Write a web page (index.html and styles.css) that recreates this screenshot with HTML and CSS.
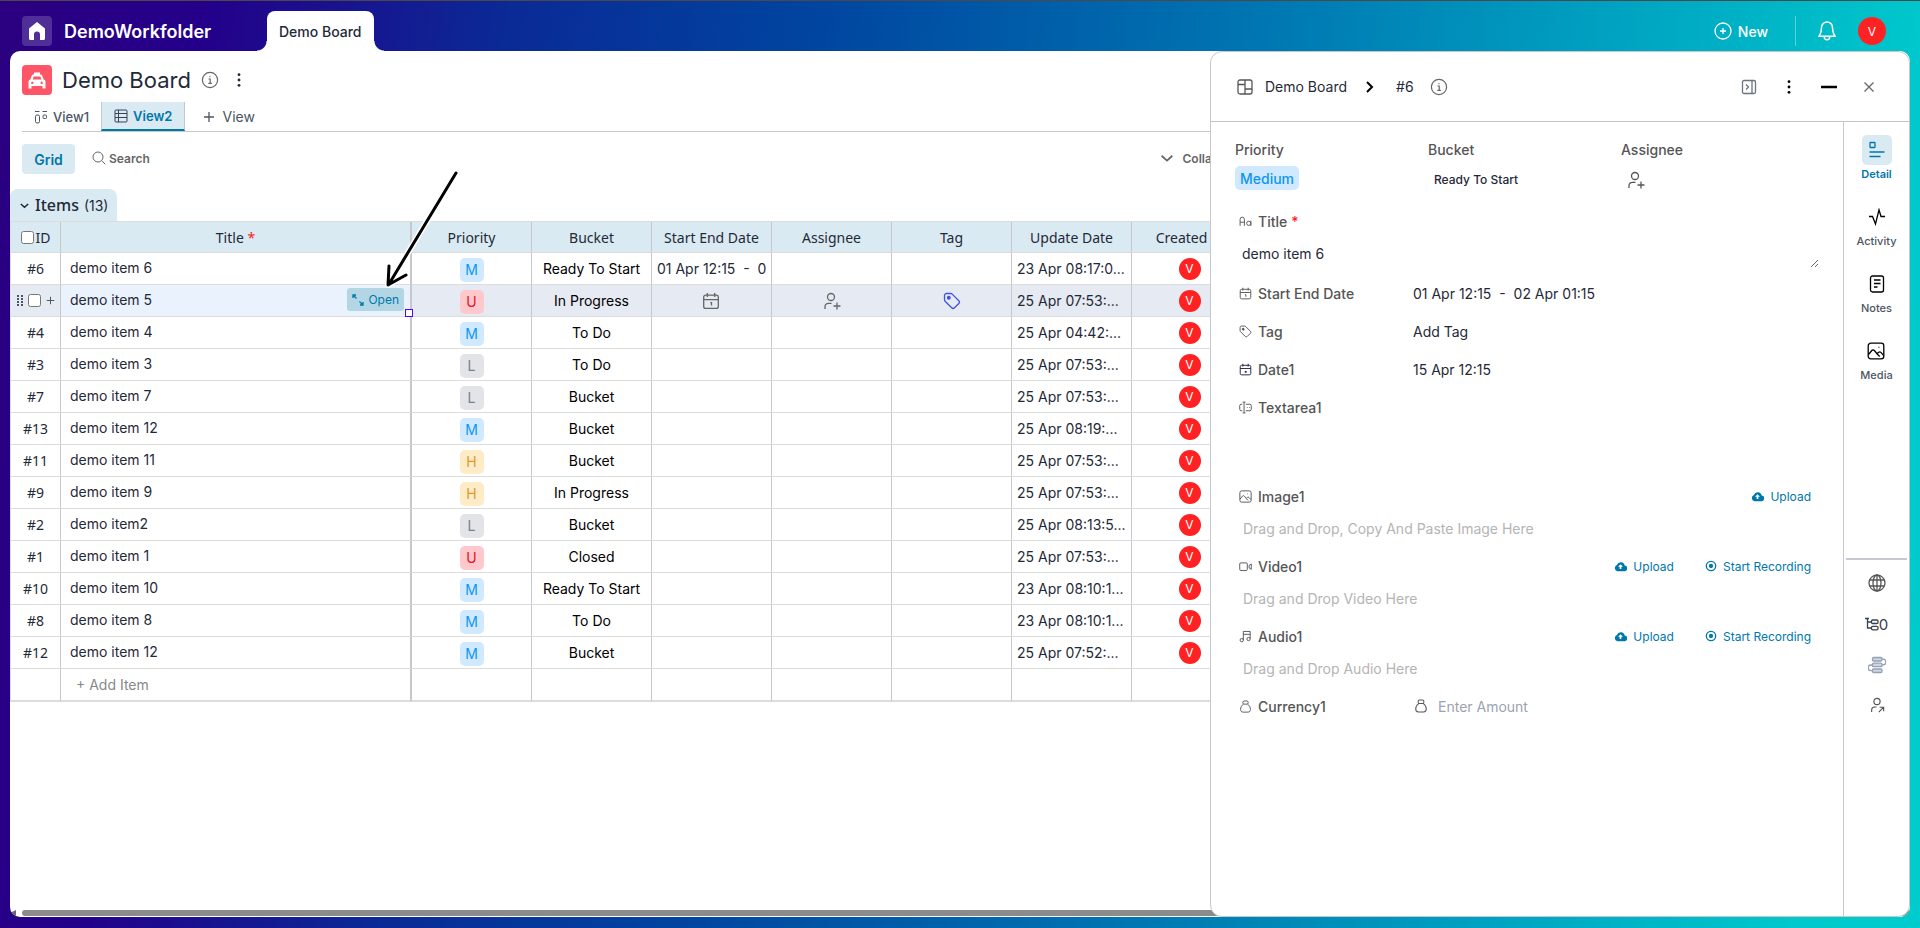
FILE: index.html
```
<!DOCTYPE html>
<html lang="en">
<head>
  <meta charset="UTF-8" />
  <meta name="viewport" content="width=device-width, initial-scale=1.0"/>
  <title>Demo Board</title>
  <link rel="stylesheet" href="styles.css">
</head>
<body>
  <svg class="sprite" aria-hidden="true">
    <symbol id="i-info" viewBox="0 0 18 18"><circle cx="9" cy="9" r="7.6"/><path d="M7.5 8h1.7v4.2M7.3 12.4h3.6M8.9 5.3v.9"/></symbol>
    <symbol id="i-dots" viewBox="0 0 18 18"><g fill="currentColor" stroke="none"><circle cx="9" cy="3" r="1.6"/><circle cx="9" cy="9" r="1.6"/><circle cx="9" cy="15" r="1.6"/></g></symbol>
    <symbol id="i-chevron" viewBox="0 0 18 18"><path d="M3 6.5l6 5.5 6-5.5"/></symbol>
    <symbol id="i-calendar" viewBox="0 0 18 18"><rect x="1.7" y="3.2" width="14.6" height="13.2" rx="2"/><path d="M1.7 7.6h14.6M5.3 1v4M12.7 1v4M8.3 10.6h1.2v3"/></symbol>
    <symbol id="i-calendar-dot" viewBox="0 0 18 18"><rect x="1.7" y="3.2" width="14.6" height="13.2" rx="2"/><path d="M1.7 7.6h14.6M5.3 1v4M12.7 1v4"/><rect x="8" y="11" width="2.5" height="2.5" fill="currentColor" stroke="none"/></symbol>
    <symbol id="i-user-plus" viewBox="0 0 18 18"><circle cx="8" cy="5" r="3.5"/><path d="M2 17v-2.2a3.5 3.5 0 0 1 3.5-3.5h3M14 10.5v7M10.5 14h7"/></symbol>
    <symbol id="i-user-arrow" viewBox="0 0 18 18"><circle cx="9" cy="5" r="3.5"/><path d="M3 17v-2.2a3.5 3.5 0 0 1 3.5-3.5h2M11 17l5-5M12 11.5h4.5V16"/></symbol>
    <symbol id="i-tag" viewBox="0 0 18 18"><path d="M1.5 3.5a2 2 0 0 1 2-2h4.3a2 2 0 0 1 1.4.6l6.6 6.6a2 2 0 0 1 0 2.8l-4.3 4.3a2 2 0 0 1-2.8 0L2.1 9.2a2 2 0 0 1-.6-1.4z"/><circle cx="5.8" cy="5.8" r="1.3" fill="currentColor"/></symbol>
    <symbol id="i-image" viewBox="0 0 18 18"><rect x="1.2" y="1.2" width="15.6" height="15.6" rx="2.6"/><path d="M1.5 12.5l3.3-4a1.7 1.7 0 0 1 2.6 0l3 3.7 2.3 2.3M10.3 11.5l1.4-1.2a1.6 1.6 0 0 1 2.2.1l2.7 3M11.5 5.3h.8"/></symbol>
    <symbol id="i-cloud" viewBox="0 0 18 14"><path fill="currentColor" fill-rule="evenodd" stroke="none" d="M14.8 5.7A5.6 5.6 0 0 0 4 4.9 4.5 4.5 0 0 0 4.7 13.5h9.5a3.9 3.9 0 0 0 .6-7.8zM9 3.8l3.4 3.5h-2.2v3.2H7.8V7.3H5.6z"/></symbol>
    <symbol id="i-record" viewBox="0 0 18 18"><circle cx="9" cy="9" r="7" stroke-width="2"/><circle cx="9" cy="9" r="3.2" fill="currentColor" stroke="none"/></symbol>
    <symbol id="i-bag" viewBox="0 0 18 18"><path d="M6.3 5.7C3.5 7.5 2.2 10.3 2.2 13c0 2.5 1.3 3.8 3.6 3.8h6.4c2.3 0 3.6-1.3 3.6-3.8 0-2.7-1.3-5.5-4.1-7.3zM6.3 5.7c-1.5-1.2-1.5-4.3.7-4.3h4c2.2 0 2.2 3.1.7 4.3"/></symbol>
    <symbol id="i-plus" viewBox="0 0 12 12"><path d="M6 1v10M1 6h10"/></symbol>
  </svg>

  <header class="topbar">
    <button class="home-btn" aria-label="Home">
      <svg viewBox="0 0 18 18"><path d="M9 0l8 6.5V16.5a1.5 1.5 0 0 1-1.5 1.5H12v-5.500a3 3 0 0 0-6 0V18H2.5A1.5 1.5 0 0 1 1 16.5V6.5z" fill="#fff" stroke="none"/></svg>
    </button>
    <div class="workfolder">DemoWorkfolder</div>
    <a class="board-tab" href="#">Demo Board</a>
    <div class="topbar-right">
      <button class="new-btn">
        <svg class="icon" viewBox="0 0 18 18"><circle cx="9" cy="9" r="8"/><path d="M9 6v6M6 9h6"/></svg>
        New
      </button>
      <span class="separator"></span>
      <button class="bell-btn" aria-label="Notifications">
        <svg viewBox="0 0 18 20"><path d="M9 1a5.5 5.5 0 0 0-5.5 5.5C3.5 12 2 13.5 1 15.3h16c-1-1.8-2.5-3.3-2.5-8.8A5.5 5.5 0 0 0 9 1zM6.3 16a2.7 2.7 0 0 0 5.4 0"/></svg>
      </button>
      <span class="avatar avatar-lg">V</span>
    </div>
  </header>

  <main class="workspace">
    <section class="board">
      <div class="board-head">
        <div class="board-title">
          <span class="board-icon">
            <svg viewBox="0 0 18 18"><path d="M6 1.5h6v2h-6zM5.5 3.5h7a2 2 0 0 1 1.9 1.4L15.6 8.5A2.5 2.5 0 0 1 17.5 11v6.5h-3V15h-11v2.5h-3V11A2.5 2.5 0 0 1 2.4 8.5L3.6 4.9A2 2 0 0 1 5.5 3.5zM5.7 5.5L4.7 8.5h8.6l-1-3zM4.3 10.6a1.2 1.2 0 1 0 .01 0zM13.7 10.6a1.2 1.2 0 1 0 .01 0z" fill="#fff" fill-rule="evenodd" stroke="none"/></svg>
          </span>
          <h1>Demo Board</h1>
          <svg class="icon info"><use href="#i-info"/></svg>
          <button class="plain" aria-label="Board menu"><svg class="icon dots"><use href="#i-dots"/></svg></button>
        </div>
        <nav class="views">
          <a class="view" href="#">
            <svg class="icon sm" viewBox="0 0 14 14"><path d="M1 1.5h4.500M8.5 1.5H13M1.5 6.500a1.500 1.500 0 0 1 1.500-1.500h1A1.500 1.500 0 0 1 5.500 6.500v5A1.500 1.500 0 0 1 4 13H3a1.500 1.500 0 0 1-1.500-1.500z"/><rect x="9" y="5" width="3.500" height="3.500" rx="1"/></svg>
            View1
          </a>
          <a class="view active" href="#">
            <svg class="icon sm" viewBox="0 0 14 14"><rect x="1" y="1" width="12" height="12" rx="1"/><path d="M1 4.500h12M1 8.500h12M4.500 1v12M8.500 4.500"/></svg>
            View2
          </a>
          <button class="add-view"><svg class="icon plus"><use href="#i-plus"/></svg> View</button>
        </nav>
      </div>

      <div class="toolbar">
        <button class="grid-btn">Grid</button>
        <button class="search-btn">
          <svg class="icon sm" viewBox="0 0 14 14"><circle cx="6" cy="6" r="5"/><path d="M9.7 9.7l3.5 3.5"/></svg>
          Search
        </button>
        <button class="collapse-btn"><svg class="icon chev"><use href="#i-chevron"/></svg> Collapse</button>
      </div>

      <button class="group-tab"><svg class="icon chev-sm"><use href="#i-chevron"/></svg><b>Items</b> (13)</button>

      <table class="grid">
        <colgroup>
          <col class="c-id"><col class="c-title"><col><col><col><col><col><col><col>
          <col class="c-rest">
        </colgroup>
        <thead>
          <tr>
            <th><label class="check-all"><input type="checkbox">ID</label></th>
            <th>Title <span class="req">*</span></th>
            <th>Priority</th>
            <th>Bucket</th>
            <th>Start End Date</th>
            <th>Assignee</th>
            <th>Tag</th>
            <th>Update Date</th>
            <th>Created By</th>
            <th></th>
          </tr>
        </thead>
        <tbody id="rows"></tbody>
      </table>

      <div class="hscroll"><span class="hscroll-arrow"></span><span class="hscroll-thumb"></span></div>

      <svg class="pointer-arrow" viewBox="0 0 90 130">
        <path class="halo" d="M78 9L11 120M11 102l-1 19 18-10"/>
        <path d="M78 9L11 120M11 102l-1 19 18-10"/>
      </svg>
    </section>

    <aside class="panel">
      <div class="panel-head">
        <svg class="icon board-ic" viewBox="0 0 16 16"><rect x="1" y="1" width="14" height="14" rx="2"/><path d="M8 1v14M1 5.5h7M8 10h7M4.5 5.5"/></svg>
        <span>Demo Board</span>
        <svg class="icon crumb" viewBox="0 0 10 12"><path d="M2 1l5 5-5 5"/></svg>
        <span>#6</span>
        <svg class="icon info"><use href="#i-info"/></svg>
        <div class="panel-actions">
          <button class="plain" aria-label="Dock"><svg class="icon dock" viewBox="0 0 16 16"><rect x="1.500" y="1.500" width="13" height="13" rx="1.5"/><path d="M11 1.500v13M5 5.5L7.5 8 5 10.5"/></svg></button>
          <button class="plain" aria-label="Item menu"><svg class="icon dots dark"><use href="#i-dots"/></svg></button>
          <button class="plain" aria-label="Minimize"><svg class="icon minus" viewBox="0 0 16 16"><path d="M0 8h16"/></svg></button>
          <button class="plain" aria-label="Close"><svg class="icon close" viewBox="0 0 16 16"><path d="M3.500 3.500l9 9M12.500 3.500l-9 9"/></svg></button>
        </div>
      </div>

      <div class="panel-body">
        <div class="fields">
          <div class="summary">
            <div><div class="label">Priority</div><button class="medium">Medium</button></div>
            <div><div class="label">Bucket</div><button class="bucket">Ready To Start</button></div>
            <div><div class="label">Assignee</div><button class="assign" aria-label="Add assignee"><svg class="icon user"><use href="#i-user-plus"/></svg></button></div>
          </div>

          <div class="field">
            <label for="f-title"><svg class="icon f" viewBox="0 0 18 18"><path d="M1.5 15V6a3 3 0 0 1 6 0v9M1.5 10h6M16.5 8v7"/><circle cx="13.5" cy="11.5" r="2.9"/></svg>Title <span class="req">*</span></label>
          </div>
          <textarea id="f-title" rows="1">demo item 6</textarea>

          <div class="field"><span class="label"><svg class="icon f"><use href="#i-calendar"/></svg>Start End Date</span><span class="value">01 Apr 12:15&nbsp; -&nbsp; 02 Apr 01:15</span></div>
          <div class="field"><span class="label"><svg class="icon f"><use href="#i-tag"/></svg>Tag</span><span class="value">Add Tag</span></div>
          <div class="field"><span class="label"><svg class="icon f navy"><use href="#i-calendar-dot"/></svg>Date1</span><span class="value">15 Apr 12:15</span></div>
          <div class="field"><label for="f-area"><svg class="icon f" viewBox="0 0 18 18"><path d="M5 1.5h4M5 16.5h4M7 1.5v15M4.5 4.5H3a2 2 0 0 0-2 2v5a2 2 0 0 0 2 2h1.5M9.5 4.5H15a2 2 0 0 1 2 2v5a2 2 0 0 1-2 2H9.5M11 9h1M14 9h1"/></svg>Textarea1</label></div>
          <textarea id="f-area" class="area"></textarea>

          <div class="field">
            <span class="label"><svg class="icon f"><use href="#i-image"/></svg>Image1</span>
            <div class="actions"><button><svg class="icon cloud"><use href="#i-cloud"/></svg>Upload</button></div>
          </div>
          <div class="drop">Drag and Drop, Copy And Paste Image Here</div>

          <div class="field">
            <span class="label"><svg class="icon f" viewBox="0 0 18 18"><rect x="1" y="4" width="10.5" height="10.5" rx="1.5"/><path d="M14 7.5L17 5.5v7.500l-3-2z"/></svg>Video1</span>
            <div class="actions">
              <button><svg class="icon cloud"><use href="#i-cloud"/></svg>Upload</button>
              <button><svg class="icon rec"><use href="#i-record"/></svg>Start Recording</button>
            </div>
          </div>
          <div class="drop">Drag and Drop Video Here</div>

          <div class="field">
            <span class="label"><svg class="icon f" viewBox="0 0 18 18"><path d="M6 14V2h9.5v10M6 6h9.5"/><circle cx="3.8" cy="14" r="2.3"/><circle cx="13.2" cy="12.5" r="2.3"/></svg>Audio1</span>
            <div class="actions">
              <button><svg class="icon cloud"><use href="#i-cloud"/></svg>Upload</button>
              <button><svg class="icon rec"><use href="#i-record"/></svg>Start Recording</button>
            </div>
          </div>
          <div class="drop">Drag and Drop Audio Here</div>

          <div class="field">
            <label for="f-amount"><svg class="icon f"><use href="#i-bag"/></svg>Currency1</label>
            <svg class="icon bag"><use href="#i-bag"/></svg>
            <input id="f-amount" type="text" placeholder="Enter Amount">
          </div>
        </div>

        <nav class="rail">
          <a class="rail-item active" href="#">
            <span class="rail-icon"><svg class="icon r" viewBox="0 0 18 18"><rect x="2" y="1.5" width="5" height="5" rx=".5"/><path d="M1.5 11h15M1.5 15.5h11"/></svg></span>
            Detail
          </a>
          <a class="rail-item" href="#">
            <span class="rail-icon"><svg class="icon r" viewBox="0 0 18 18"><path d="M1 8.5h3.5L7.5 16 11 1.8 13 8.5h4"/></svg></span>
            Activity
          </a>
          <a class="rail-item" href="#">
            <span class="rail-icon"><svg class="icon r" viewBox="0 0 18 18"><rect x="2.5" y="1" width="13" height="16" rx="2"/><path d="M6 5h6.5M6 8.5h6.5M6 12h3.5"/></svg></span>
            Notes
          </a>
          <a class="rail-item" href="#">
            <span class="rail-icon"><svg class="icon r"><use href="#i-image"/></svg></span>
            Media
          </a>
          <div class="rail-tools">
            <button class="plain" aria-label="Web"><svg class="icon r" viewBox="0 0 18 18"><circle cx="9" cy="9" r="8"/><ellipse cx="9" cy="9" rx="4" ry="8"/><path d="M9 1v16M1.5 6h15M1.5 12h15"/></svg></button>
            <button class="plain subitems" aria-label="Sub items"><svg class="icon tree" viewBox="0 0 14 14"><path d="M0 1.5h4M2.5 1.5v9.5h3.5M2.5 5h3.5"/><rect x="6.5" y="3" width="6.5" height="3.5" rx="1.2"/><rect x="6.5" y="9.3" width="6.5" height="3.5" rx="1.2"/></svg>0</button>
            <button class="plain flow" aria-label="Flow"><svg class="icon r" viewBox="0 0 18 18"><g fill="#cfd6df"><rect x="4.5" y="1.5" width="9.5" height="3.5" rx="1.2"/><rect x="4.5" y="7.2" width="9.5" height="3.5" rx="1.2"/><rect x="4.5" y="13" width="9.5" height="3.5" rx="1.2"/></g><path d="M14 3.2h1a2.8 2.8 0 0 1 0 5.7h-1M4.5 9H3a2.8 2.8 0 0 0 0 5.7h1.5"/></svg></button>
            <button class="plain" aria-label="Assign"><svg class="icon user-sm"><use href="#i-user-arrow"/></svg></button>
          </div>
        </nav>
      </div>
    </aside>
  </main>

  <script>
    const items = [
      [6, "demo item 6", "M", "Ready To Start", "23 Apr 08:17:0..."],
      [5, "demo item 5", "U", "In Progress", "25 Apr 07:53:..."],
      [4, "demo item 4", "M", "To Do", "25 Apr 04:42:..."],
      [3, "demo item 3", "L", "To Do", "25 Apr 07:53:..."],
      [7, "demo item 7", "L", "Bucket", "25 Apr 07:53:..."],
      [13, "demo item 12", "M", "Bucket", "25 Apr 08:19:..."],
      [11, "demo item 11", "H", "Bucket", "25 Apr 07:53:..."],
      [9, "demo item 9", "H", "In Progress", "25 Apr 07:53:..."],
      [2, "demo item2", "L", "Bucket", "25 Apr 08:13:5..."],
      [1, "demo item 1", "U", "Closed", "25 Apr 07:53:..."],
      [10, "demo item 10", "M", "Ready To Start", "23 Apr 08:10:1..."],
      [8, "demo item 8", "M", "To Do", "23 Apr 08:10:1..."],
      [12, "demo item 12", "M", "Bucket", "25 Apr 07:52:..."]
    ];

    const icon = (name, cls) => `<svg class="icon ${cls}"><use href="#i-${name}"/></svg>`;
    const grip = `<svg class="grip" viewBox="0 0 6 11"><g fill="currentColor"><rect width="2" height="2"/><rect x="4" width="2" height="2"/><rect y="3" width="2" height="2"/><rect x="4" y="3" width="2" height="2"/><rect y="6" width="2" height="2"/><rect x="4" y="6" width="2" height="2"/><rect y="9" width="2" height="2"/><rect x="4" y="9" width="2" height="2"/></g></svg>`;
    const openBtn = `<button class="open-btn"><svg class="icon expand" viewBox="0 0 12 12"><path d="M1 4V1h3M1 1l3.5 3.5M11 8v3H8M11 11L7.5 7.5"/></svg>Open</button><span class="fill-handle"></span>`;

    const html = items.map(([id, title, priority, bucket, updated]) => {
      const hover = id === 5;
      return `<tr class="${hover ? "hover" : ""}">
        <td class="id">${hover ? `<div class="row-tools">${grip}<input type="checkbox" aria-label="Select row">${icon("plus", "row-plus")}</div>` : "#" + id}</td>
        <td class="title"><div class="title-cell">${title}${hover ? openBtn : ""}</div></td>
        <td><span class="badge ${priority}">${priority}</span></td>
        <td class="bucket-cell">${bucket}</td>
        <td class="date">${id === 6 ? "01 Apr 12:15&nbsp; -&nbsp; 0" : hover ? icon("calendar", "cell-ic") : ""}</td>
        <td>${hover ? icon("user-plus", "cell-ic") : ""}</td>
        <td>${hover ? icon("tag", "cell-ic tag-ic") : ""}</td>
        <td class="updated">${updated}</td>
        <td class="created"><span class="avatar">V</span></td>
        <td></td>
      </tr>`;
    }).join("");

    document.getElementById("rows").innerHTML = html +
      `<tr class="add-row"><td></td><td class="title"><button class="plain add-item">+ Add Item</button></td>${"<td></td>".repeat(8)}</tr>`;
  </script>
</body>
</html>
```
FILE: styles.css
```
* {
  box-sizing: border-box;
}

body {
  margin: 0;
  height: 100vh;
  display: flex;
  flex-direction: column;
  font-family: Inter, sans-serif;
  font-size: 14px;
  color: #1f2937;
  background: linear-gradient(98deg, #2b0080 0%, #24008a 10%, #0a2a96 25%, #0045a0 40%, #0077b2 62%, #00a5c2 80%, #00c8cc 94%, #00cccd 100%);
  border-top: 1px solid #4f4646;
  overflow: hidden;
}

button {
  font: inherit;
  color: inherit;
  background: none;
  border: none;
  padding: 0;
  cursor: pointer;
}

a {
  color: inherit;
  text-decoration: none;
}

input[type="checkbox"] {
  width: 13px;
  height: 13px;
  margin: 0;
}

.sprite {
  position: absolute;
  width: 0;
  height: 0;
}

.icon {
  width: 18px;
  height: 18px;
  flex: none;
  fill: none;
  stroke: currentColor;
  stroke-width: 1.3;
}

.plain {
  display: flex;
  align-items: center;
}

.req {
  color: #ff2020;
}

.avatar {
  display: inline-flex;
  align-items: center;
  justify-content: center;
  width: 22px;
  height: 22px;
  border-radius: 50%;
  background: #ff2222;
  color: #fff;
  font-size: 12px;
  vertical-align: middle;
}

.avatar-lg {
  width: 28px;
  height: 28px;
}

/* top bar */
.topbar {
  display: flex;
  align-items: center;
  height: 50px;
  flex: none;
  padding: 10px 34px 0 22px;
  color: #fff;
}

.home-btn {
  display: flex;
  align-items: center;
  justify-content: center;
  width: 30px;
  height: 30px;
  border-radius: 4px;
  background: rgba(255, 255, 255, 0.18);
}

.home-btn svg {
  width: 18px;
  height: 18px;
}

.workfolder {
  width: 203px;
  margin-left: 12px;
  font-size: 18px;
  font-weight: 600;
}

.board-tab {
  position: relative;
  height: 40px;
  line-height: 42px;
  padding: 0 12px;
  background: #fff;
  color: #1f2937;
  font-size: 14px;
  font-weight: 500;
  border-radius: 8px 8px 0 0;
}

.board-tab::before,
.board-tab::after {
  content: "";
  position: absolute;
  bottom: 0;
  width: 10px;
  height: 10px;
}

.board-tab::before {
  right: 100%;
  background: radial-gradient(circle at 0 0, transparent 9px, #fff 10px);
}

.board-tab::after {
  left: 100%;
  background: radial-gradient(circle at 100% 0, transparent 9px, #fff 10px);
}

.topbar-right {
  display: flex;
  align-items: center;
  margin-left: auto;
}

.new-btn {
  display: flex;
  align-items: center;
  gap: 6px;
  font-weight: 500;
}

.separator {
  width: 1px;
  height: 30px;
  margin: 0 22px 0 27px;
  background: rgba(255, 255, 255, 0.35);
}

.bell-btn {
  display: flex;
  margin-right: 22px;
}

.bell-btn svg {
  width: 18px;
  height: 20px;
  fill: none;
  stroke: #fff;
  stroke-width: 1.5;
}

/* board */
.workspace {
  position: relative;
  flex: 1;
  min-height: 0;
  margin: 0 10px 11px;
  background: #fff;
  border-radius: 10px;
  overflow: hidden;
}

.board {
  display: flex;
  flex-direction: column;
  align-items: flex-start;
  height: 100%;
}

.board-head {
  align-self: stretch;
  margin-left: 12px;
  padding-top: 14px;
  border-bottom: 1px solid #c8c8cc;
}

.board-title {
  display: flex;
  align-items: center;
  height: 30px;
}

.board-icon {
  display: flex;
  align-items: center;
  justify-content: center;
  width: 30px;
  height: 30px;
  border-radius: 4px;
  background: #ff5566;
}

.board-icon svg {
  width: 18px;
  height: 18px;
}

h1 {
  margin: 0 10px;
  font-size: 22px;
  line-height: 28px;
  font-weight: 400;
}

.info {
  color: #666;
  stroke-width: 1.2;
}

.board-title .dots {
  margin-left: 11px;
  width: 18px;
  height: 16px;
}

.views {
  display: flex;
  align-items: center;
  height: 36px;
  padding-top: 7px;
  color: #4b5563;
}

.view {
  display: flex;
  align-items: center;
  gap: 5px;
  height: 29px;
  padding: 0 12px;
  font-size: 13px;
  font-weight: 500;
}

.view.active {
  background: #daeaf2;
  border-left: 1px solid #c8c8cc;
  border-right: 1px solid #c8c8cc;
  border-bottom: 2px solid #0077aa;
  color: #0077aa;
  font-weight: 600;
}

.view.active .icon {
  color: #37415a;
}

.sm {
  width: 14px;
  height: 14px;
  stroke-width: 1;
}

.add-view {
  display: flex;
  align-items: center;
  gap: 7px;
  margin-left: 18px;
}

.plus {
  width: 12px;
  height: 12px;
}

.toolbar {
  display: flex;
  align-items: center;
  padding: 12px 12px 15px;
  align-self: stretch;
  font-size: 12px;
  font-weight: 600;
  color: #666;
}

.grid-btn {
  width: 53px;
  height: 30px;
  border-radius: 4px;
  background: #daeaf2;
  color: #0077aa;
  font-size: 14px;
  font-weight: 600;
}

.search-btn,
.collapse-btn {
  display: flex;
  align-items: center;
  gap: 3px;
  margin-left: 17px;
  padding-bottom: 2px;
}

.collapse-btn {
  gap: 8px;
  margin-left: auto;
  margin-right: 665px;
}

.chev {
  width: 16px;
  height: 16px;
  stroke-width: 2;
}

.group-tab {
  display: flex;
  align-items: center;
  gap: 5px;
  height: 32px;
  padding: 0 9px;
  background: #daeaf2;
  border-radius: 8px 8px 0 0;
}

.group-tab b {
  font-family: "Noto Sans", sans-serif;
  font-size: 16px;
  font-weight: 500;
}

.chev-sm {
  width: 11px;
  height: 11px;
  stroke-width: 2.5;
}

.grid {
  table-layout: fixed;
  width: 100%;
  border-collapse: separate;
  border-spacing: 0;
  border-top: 1px solid #dcdcdc;
  border-left: 1px solid #dcdcdc;
}

.grid col {
  width: 120px;
}

.grid .c-id {
  width: 50px;
}

.grid .c-title {
  width: 351px;
}

.grid .c-rest {
  width: auto;
}

.grid th,
.grid td {
  height: 32px;
  padding: 0;
  border-right: 1px solid #c8c8cc;
  border-bottom: 1px solid #dcdcdc;
  text-align: center;
  white-space: nowrap;
  overflow: hidden;
}

.grid th {
  height: 31px;
  background: #daeaf2;
  font-family: "Noto Sans", sans-serif;
  font-weight: 400;
}

.grid th:nth-child(2),
.grid td:nth-child(2) {
  border-right: 2px solid #c8c8cc;
}

.check-all {
  display: flex;
  align-items: center;
  justify-content: center;
  gap: 2px;
}

.grid .id {
  font-family: "Noto Sans", sans-serif;
}

.grid .title {
  text-align: left;
  overflow: visible;
}

.title-cell {
  position: relative;
  display: flex;
  align-items: center;
  height: 31px;
  padding: 0 6px 2px 9px;
}

.hover td {
  background: #e6eaf3;
}

.grid .hover .title {
  background: #eaf2fd;
}

.row-tools {
  display: flex;
  align-items: center;
  justify-content: center;
  gap: 5px;
  color: #4b5563;
}

.grip {
  width: 6px;
  height: 11px;
}

.row-plus {
  width: 9px;
  height: 9px;
}

.open-btn {
  display: flex;
  align-items: center;
  gap: 4px;
  height: 23px;
  margin-left: auto;
  padding: 0 5px;
  border-radius: 3px;
  background: #b3d6e5;
  color: #0077aa;
  font-size: 12px;
}

.expand {
  width: 12px;
  height: 12px;
}

.fill-handle {
  position: absolute;
  right: -3px;
  bottom: -1px;
  z-index: 1;
  width: 8px;
  height: 8px;
  border: 1px solid #5500ff;
  background: #fff;
}

.badge {
  display: inline-flex;
  align-items: center;
  justify-content: center;
  width: 24px;
  height: 24px;
  margin-top: 2px;
  border-radius: 5px;
  vertical-align: middle;
}

.M {
  background: #d0e9ff;
  color: #0d96f2;
}

.U {
  background: #ffc8cc;
  color: #e8101c;
}

.L {
  background: #e2e4e8;
  color: #7a808c;
}

.H {
  background: #ffebc8;
  color: #e09a20;
}

.bucket-cell {
  color: #000;
}

.grid .date,
.grid .updated {
  padding-left: 5px;
  text-align: left;
}

.grid .hover .date {
  padding: 0 2px 0 0;
  text-align: center;
}

.grid .created {
  padding-right: 4px;
}

.cell-ic {
  color: #666;
  vertical-align: middle;
}

.tag-ic {
  color: #4353e0;
}

.grid .add-row td {
  height: 33px;
  border-bottom-width: 2px;
}

.add-item {
  margin-left: 15px;
  color: #888;
}

.hscroll {
  display: flex;
  align-items: center;
  align-self: stretch;
  gap: 6px;
  height: 8px;
  margin-top: auto;
}

.hscroll-arrow {
  width: 6px;
  height: 6px;
  background: #666;
  clip-path: polygon(100% 0, 100% 100%, 0 50%);
}

.hscroll-thumb {
  flex: 1;
  height: 6px;
  border-radius: 3px;
  background: #8b8b8b;
}

.pointer-arrow {
  position: absolute;
  left: 368px;
  top: 113px;
  width: 90px;
  height: 130px;
  fill: none;
  stroke: #000;
  stroke-width: 3;
  stroke-linecap: round;
  stroke-linejoin: round;
  pointer-events: none;
}

.pointer-arrow .halo {
  stroke: #fff;
  stroke-width: 6;
}

/* item panel */
.panel {
  position: absolute;
  top: 0;
  right: 0;
  bottom: 0;
  display: flex;
  flex-direction: column;
  width: 700px;
  background: #fff;
  border: 1px solid #c8c8cc;
  border-radius: 12px;
  overflow: hidden;
}

.panel-head {
  display: flex;
  align-items: center;
  height: 70px;
  flex: none;
  padding: 0 32px 0 26px;
  border-bottom: 1px solid #c4c4cc;
}

.board-ic {
  width: 16px;
  height: 16px;
  margin-right: 12px;
  color: #555;
}

.crumb {
  width: 10px;
  height: 12px;
  margin: 0 21px 0 18px;
  color: #000;
  stroke-width: 2;
}

.panel-head .info {
  margin-left: 16px;
}

.panel-actions {
  display: flex;
  gap: 24px;
  margin-left: auto;
}

.panel-actions .icon {
  width: 16px;
  height: 16px;
}

.dock {
  color: #6b7280;
}

.dark,
.minus {
  color: #000;
}

.minus {
  stroke-width: 2.5;
}

.close {
  color: #666;
}

.panel-body {
  display: flex;
  flex: 1;
  min-height: 0;
}

.fields {
  flex: 1;
  padding: 19px 24px 0;
}

.summary {
  display: grid;
  grid-template-columns: repeat(3, 193px);
  height: 61px;
}

.fields .label,
.fields label {
  color: #555;
  font-weight: 500;
}

.summary .label {
  height: 25px;
  line-height: 18px;
}

.medium {
  height: 24px;
  padding: 0 5px;
  border-radius: 5px;
  background: #d0e9ff;
  color: #0d96f2;
  font-weight: 500;
}

.bucket {
  height: 26px;
  padding: 0 6px;
  font-size: 12px;
  font-weight: 500;
}

.assign {
  display: flex;
  align-items: center;
  height: 28px;
  margin-left: 6px;
  color: #555;
}

.field {
  display: flex;
  align-items: center;
  height: 38px;
}

.field .label,
.field label {
  display: flex;
  align-items: center;
  width: 178px;
}

.field .req {
  margin-left: 4px;
}

.f {
  width: 13px;
  height: 13px;
  margin: 0 6px 0 4px;
}

.navy {
  color: #1f2340;
}

textarea {
  display: block;
  width: 584px;
  height: 28px;
  min-height: 28px;
  margin-bottom: 6px;
  padding: 5px 7px;
  border: none;
  outline: none;
  resize: vertical;
  background: none;
  font: inherit;
  color: inherit;
  overflow: hidden;
}

.area {
  height: 45px;
  resize: none;
}

.actions {
  display: flex;
  gap: 31px;
  margin-left: auto;
  margin-right: 8px;
  color: #0077aa;
  font-size: 12px;
}

.actions button {
  display: flex;
  align-items: center;
  gap: 6px;
}

.cloud {
  width: 13px;
  height: 11px;
}

.rec {
  width: 12px;
  height: 12px;
}

.drop {
  height: 32px;
  padding: 5px 8px;
  color: #b4b4b4;
}

.bag {
  width: 14px;
  height: 14px;
  margin-left: 1px;
  color: #555;
}

.field input {
  width: 200px;
  padding: 0;
  margin-left: 10px;
  border: none;
  outline: none;
  font: inherit;
}

.field input::placeholder {
  color: #9ca3af;
}

.rail {
  display: flex;
  flex-direction: column;
  align-items: center;
  width: 66px;
  padding-top: 13px;
  border-left: 1px solid #c8c8cc;
}

.rail-item {
  display: flex;
  flex-direction: column;
  align-items: center;
  height: 67px;
  color: #4b5563;
  font-size: 11px;
  line-height: 18px;
  font-weight: 500;
}

.rail-icon {
  display: flex;
  align-items: center;
  justify-content: center;
  width: 30px;
  height: 30px;
  border-radius: 5px;
  color: #000;
}

.active .rail-icon {
  background: #daeaf2;
  color: #0077aa;
}

.rail-item.active {
  color: #0077aa;
  font-weight: 600;
}

.rail-tools {
  display: flex;
  flex-direction: column;
  align-items: center;
  gap: 23px;
  width: 61px;
  margin-top: 155px;
  padding-top: 14px;
  border-top: 2px solid #c8c8d4;
  color: #555;
}

.subitems {
  height: 18px;
  color: #374151;
  font-size: 15px;
}

.tree {
  width: 14px;
  height: 14px;
}

.flow {
  color: #94a0b4;
}

.r {
  width: 18px;
  height: 18px;
}

.user-sm {
  width: 16px;
  height: 16px;
}
```
